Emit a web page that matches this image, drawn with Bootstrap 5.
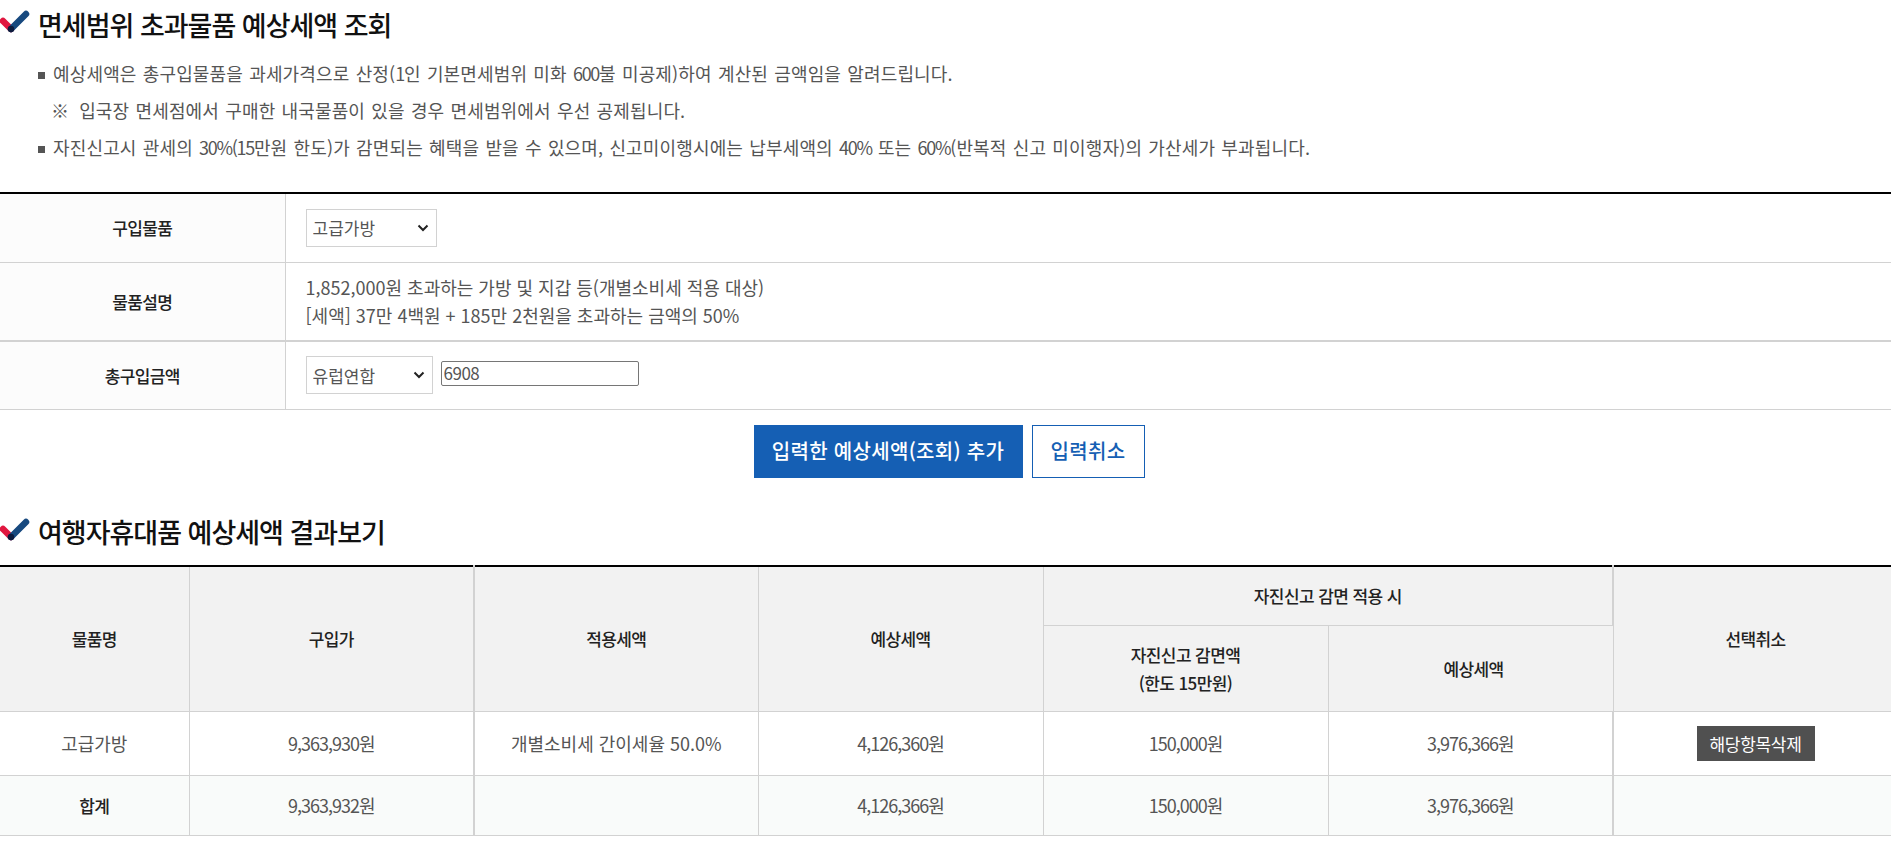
<!DOCTYPE html>
<html lang="ko">
<head>
    <meta charset="UTF-8">
    <meta name="viewport" content="width=device-width, initial-scale=1.0">
    <title>여행자휴대품 예상세액 조회</title>
    <link href="https://cdn.jsdelivr.net/npm/bootstrap@5.3.3/dist/css/bootstrap.min.css" rel="stylesheet">
    <style>
        body {
            font-family: "Noto Sans CJK KR", "Noto Sans", sans-serif;
            font-size: 18px;
            color: #555;
            background: #fff;
        }
        .sec-title {
            height: 52px;
            font-size: 27px;
            font-weight: 500;
            letter-spacing: -1px;
            color: #111;
        }
        .sec-title svg { width: 32px; height: 24px; margin-right: 6px; margin-top: -6px; }
        .title-1 { padding-bottom: 2px; }
        .note-list { margin: 3px 0 26px; padding: 0 0 0 38px; list-style: none; word-spacing: 1px; letter-spacing: 0.15px; }
        .note-list li { height: 37px; line-height: 37px; padding-left: 15px; position: relative; }
        .note-list li.sq::before {
            content: "";
            position: absolute;
            left: 0;
            top: 17px;
            width: 7px;
            height: 7px;
            background: #555;
        }
        .note-list .ref { margin-left: -2px; margin-right: 10px; }
        .note-list .dig { letter-spacing: -1.3px; }

        .tax-table { width: 100%; table-layout: fixed; border-collapse: collapse; border-top: 2px solid #000; margin: 0; }
        .tax-table th, .tax-table td { border: 1px solid #d2d2d2; text-align: center; vertical-align: middle; padding: 0; }
        .tax-table tr > :first-child { border-left: 0; }
        .tax-table tr > :last-child { border-right: 0; }
        .tax-table th { font-size: 17px; font-weight: 500; letter-spacing: -0.6px; color: #222; }

        .form-tbl th { background: #fcfcfc; }
        .form-tbl td { text-align: left; padding-left: 20px; line-height: 28px; }
        .form-tbl .row-item { height: 69px; }
        .form-tbl .row-desc { height: 79px; }
        .form-tbl .row-desc > * { border-bottom: 2px solid #d2d2d2; }
        .form-tbl .row-amt { height: 68px; }
        .sel-box {
            display: inline-block;
            height: 38px;
            padding: 0 30px 0 6px;
            border: 1px solid #d2d2d2;
            border-radius: 0;
            font-size: 17px;
            color: #555;
            background-image: url("data:image/svg+xml,%3csvg xmlns='http://www.w3.org/2000/svg' viewBox='0 0 12 8'%3e%3cpath d='M1.5 1.5L6 6l4.5-4.5' fill='none' stroke='%23222' stroke-width='2'/%3e%3c/svg%3e");
            background-size: 12px 8px;
            background-position: right 7px center;
            vertical-align: middle;
        }
        .sel-item { width: 131px; }
        .sel-cur { width: 127px; }
        .amt-input {
            display: inline-block;
            width: 198px;
            height: 25px;
            margin-left: 3px;
            margin-bottom: 4px;
            padding: 0 2px;
            border: 1px solid #767676;
            border-radius: 2px;
            font-size: 17px;
            letter-spacing: -0.5px;
            color: #555;
            vertical-align: middle;
        }
        .btn-row { margin-top: 15px; padding-left: 7px; gap: 9px; }
        .act-btn {
            height: 53px;
            border-radius: 0;
            border: 1px solid #155fb4;
            font-size: 20px;
            font-weight: 500;
            letter-spacing: 0.3px;
            padding: 0;
        }
        .act-add { width: 269px; background: #155fb4; color: #fff; }
        .act-cancel { width: 113px; background: #fff; color: #155fb4; }

        .title-2 { margin-top: 29px; margin-bottom: 6px; }
        .res-tbl thead th { background: #f2f2f2; }
        .res-tbl .head-top { height: 60px; }
        .res-tbl .head-sub { height: 86px; line-height: 28px; }
        .res-tbl .body-row { height: 64px; }
        .res-tbl .total-row { height: 60px; background: #f9fbfa; }
        .res-tbl .total-row th { background: #f9fbfa; }
        .res-tbl .thick { border-right-width: 2px; }
        .res-tbl tr > :last-child { padding-left: 6px; }
        .res-tbl .num { letter-spacing: -1px; }
        .del-btn {
            width: 118px;
            height: 35px;
            border: 0;
            border-radius: 0;
            background: #505050;
            color: #fff;
            font-size: 17px;
            letter-spacing: -0.3px;
            padding: 0;
        }
    </style>
</head>
<body>
    <!-- 조회 폼 -->
    <h2 class="sec-title title-1 d-flex align-items-center m-0">
        <svg viewBox="0 0 32 24"><path d="M3 11l8 8" stroke="#e0163f" stroke-width="6.5" stroke-linecap="round" fill="none"/><path d="M11 19L26 4" stroke="#17497f" stroke-width="6.5" stroke-linecap="round" fill="none"/><circle cx="11" cy="19" r="3.2" fill="#0d1b3d"/></svg>
        면세범위 초과물품 예상세액 조회
    </h2>
    <ul class="note-list">
        <li class="sq">예상세액은 총구입물품을 과세가격으로 산정(<span class="dig">1</span>인 기본면세범위 미화 <span class="dig">600</span>불 미공제)하여 계산된 금액임을 알려드립니다.</li>
        <li><span class="ref">※</span>입국장 면세점에서 구매한 내국물품이 있을 경우 면세범위에서 우선 공제됩니다.</li>
        <li class="sq">자진신고시 관세의 <span class="dig">30%(15</span>만원 한도)가 감면되는 혜택을 받을 수 있으며, 신고미이행시에는 납부세액의 <span class="dig">40%</span> 또는 <span class="dig">60%</span>(반복적 신고 미이행자)의 가산세가 부과됩니다.</li>
    </ul>

    <table class="tax-table form-tbl">
        <colgroup><col style="width: 285px"><col></colgroup>
        <tbody>
            <tr class="row-item">
                <th>구입물품</th>
                <td>
                    <select class="form-select sel-box sel-item"><option>고급가방</option></select>
                </td>
            </tr>
            <tr class="row-desc">
                <th>물품설명</th>
                <td>1,852,000원 초과하는 가방 및 지갑 등(개별소비세 적용 대상)<br>[세액] 37만 4백원 + 185만 2천원을 초과하는 금액의 50%</td>
            </tr>
            <tr class="row-amt">
                <th>총구입금액</th>
                <td>
                    <select class="form-select sel-box sel-cur"><option>유럽연합</option></select>
                    <input type="text" class="amt-input" value="6908">
                </td>
            </tr>
        </tbody>
    </table>

    <div class="d-flex justify-content-center btn-row">
        <button type="button" class="btn act-btn act-add">입력한 예상세액(조회) 추가</button>
        <button type="button" class="btn act-btn act-cancel">입력취소</button>
    </div>

    <!-- 결과 -->
    <h2 class="sec-title title-2 d-flex align-items-center">
        <svg viewBox="0 0 32 24"><path d="M3 11l8 8" stroke="#e0163f" stroke-width="6.5" stroke-linecap="round" fill="none"/><path d="M11 19L26 4" stroke="#17497f" stroke-width="6.5" stroke-linecap="round" fill="none"/><circle cx="11" cy="19" r="3.2" fill="#0d1b3d"/></svg>
        여행자휴대품 예상세액 결과보기
    </h2>
    <table class="tax-table res-tbl">
        <colgroup>
            <col style="width: 189px"><col style="width: 285px"><col style="width: 284px"><col style="width: 285px">
            <col style="width: 285px"><col style="width: 285px"><col>
        </colgroup>
        <thead>
            <tr class="head-top">
                <th rowspan="2">물품명</th>
                <th rowspan="2" class="thick">구입가</th>
                <th rowspan="2">적용세액</th>
                <th rowspan="2">예상세액</th>
                <th colspan="2" class="thick">자진신고 감면 적용 시</th>
                <th rowspan="2">선택취소</th>
            </tr>
            <tr class="head-sub">
                <th>자진신고 감면액<br>(한도 15만원)</th>
                <th class="thick">예상세액</th>
            </tr>
        </thead>
        <tbody>
            <tr class="body-row">
                <td>고급가방</td>
                <td class="thick num">9,363,930원</td>
                <td>개별소비세 간이세율 50.0%</td>
                <td class="num">4,126,360원</td>
                <td class="num">150,000원</td>
                <td class="thick num">3,976,366원</td>
                <td><button type="button" class="btn del-btn">해당항목삭제</button></td>
            </tr>
            <tr class="total-row">
                <th>합계</th>
                <td class="thick num">9,363,932원</td>
                <td></td>
                <td class="num">4,126,366원</td>
                <td class="num">150,000원</td>
                <td class="thick num">3,976,366원</td>
                <td></td>
            </tr>
        </tbody>
    </table>
    <script src="https://cdn.jsdelivr.net/npm/bootstrap@5.3.3/dist/js/bootstrap.bundle.min.js"></script>
</body>
</html>
